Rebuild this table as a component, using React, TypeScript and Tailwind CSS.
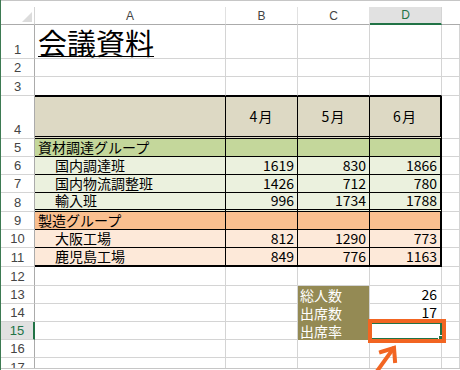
import type { ReactNode } from "react";

const FONT = "font-['Noto_Sans_CJK_JP',sans-serif]";
const HFONT = "font-['Liberation_Sans','Noto_Sans',sans-serif]";
const GRID = "border-r border-b border-r-[#d4d4d4] border-b-[#d4d4d4]";

type DataRow = { n: number; name: string; b: string; c: string; d: string; bg: string; bottom: string; h: string };

const dataRows: DataRow[] = [
  { n: 6, name: "国内調達班", b: "1619", c: "830", d: "1866", bg: "bg-[#ebf1de]", bottom: "border-b border-b-black", h: "h-[18px]" },
  { n: 7, name: "国内物流調整班", b: "1426", c: "712", d: "780", bg: "bg-[#ebf1de]", bottom: "border-b border-b-black", h: "h-[18px]" },
  { n: 8, name: "輸入班", b: "996", c: "1734", d: "1788", bg: "bg-[#ebf1de]", bottom: "border-b-[3px] border-double border-b-black", h: "h-[19px]" },
];

const osakaRows: DataRow[] = [
  { n: 10, name: "大阪工場", b: "812", c: "1290", d: "773", bg: "bg-[#fde9d9]", bottom: "border-b border-b-black", h: "h-[18px]" },
  { n: 11, name: "鹿児島工場", b: "849", c: "776", d: "1163", bg: "bg-[#fde9d9]", bottom: "border-b-2 border-b-black", h: "h-[19px]" },
];

function RowHead({ n, active = false, top = false }: { n: number; active?: boolean; top?: boolean }) {
  return (
    <div
      className={`w-[34px] shrink-0 flex justify-center border-b border-b-[#d4d4d4] text-[13px] leading-[15px] ${HFONT} ${
        top ? "items-start pt-[2px]" : "items-end pb-[1px]"
      } ${
        active
          ? "bg-[#e1e1e1] text-[#217346] border-r-2 border-r-[#217346]"
          : "bg-white text-[#444] border-r border-r-[#ababab]"
      }`}
    >
      {n}
    </div>
  );
}

function Row({ n, h, active, top, children }: { n: number; h: string; active?: boolean; top?: boolean; children?: ReactNode }) {
  return (
    <div className={`flex shrink-0 ${h}`}>
      <RowHead n={n} active={active} top={top} />
      {children}
    </div>
  );
}

function Blank() {
  return (
    <>
      <div className={`w-[191px] shrink-0 ${GRID}`} />
      <div className={`w-[72px] shrink-0 ${GRID}`} />
      <div className={`w-[72px] shrink-0 ${GRID}`} />
      <div className={`w-[72px] shrink-0 ${GRID}`} />
      <div className={`flex-1 ${GRID}`} />
    </>
  );
}

function Num({ v, bg, bottom, last = false }: { v: string; bg: string; bottom: string; last?: boolean }) {
  return (
    <div
      className={`w-[72px] shrink-0 flex items-end justify-end pr-[3px] leading-[17px] ${bg} ${bottom} ${
        last ? "border-r-2 border-r-black" : "border-r border-r-black"
      }`}
    >
      {v}
    </div>
  );
}

function TableRow({ r }: { r: DataRow }) {
  return (
    <Row n={r.n} h={r.h}>
      <div className={`w-[191px] shrink-0 flex items-end pl-[20px] leading-[17px] border-r border-r-black ${r.bg} ${r.bottom}`}>
        {r.name}
      </div>
      <Num v={r.b} bg={r.bg} bottom={r.bottom} />
      <Num v={r.c} bg={r.bg} bottom={r.bottom} />
      <Num v={r.d} bg={r.bg} bottom={r.bottom} last />
      <div className={`flex-1 ${GRID}`} />
    </Row>
  );
}

function GroupRow({ n, name, bg }: { n: number; name: string; bg: string }) {
  return (
    <Row n={n} h="h-[18px]">
      <div className={`w-[191px] shrink-0 flex items-end pl-[3px] leading-[17px] border-r border-b border-black ${bg}`}>{name}</div>
      <div className={`w-[72px] shrink-0 border-r border-b border-black ${bg}`} />
      <div className={`w-[72px] shrink-0 border-r border-b border-black ${bg}`} />
      <div className={`w-[72px] shrink-0 border-b border-b-black border-r-2 border-r-black ${bg}`} />
      <div className={`flex-1 ${GRID}`} />
    </Row>
  );
}

function SummaryRow({ n, label, value, active }: { n: number; label: string; value: string; active?: boolean }) {
  return (
    <Row n={n} h="h-[18px]" active={active}>
      <div className={`w-[191px] shrink-0 ${GRID}`} />
      <div className={`w-[72px] shrink-0 ${GRID}`} />
      <div className="w-[72px] shrink-0 flex items-end pl-[2px] leading-[17px] bg-[#948a54] text-white border-r border-r-[#d4d4d4]">
        {label}
      </div>
      <div className={`w-[72px] shrink-0 flex items-end justify-end pr-[4px] leading-[17px] ${GRID}`}>{value}</div>
      <div className={`flex-1 ${GRID}`} />
    </Row>
  );
}

export default function App() {
  return (
    <div className={`relative w-[460px] h-[370px] overflow-hidden bg-white border-l border-l-[#3d7a52] flex flex-col text-[14px] text-black ${FONT}`}>
      <div className="h-[7px] shrink-0 border-t border-t-[#c6c6c6]" />

      {/* column headers */}
      <div className={`flex h-[18px] shrink-0 text-[12px] text-[#444] ${HFONT}`}>
        <div className="w-[34px] shrink-0 flex items-end justify-end pr-[2px] pb-[2px] border-r border-b border-r-[#d4d4d4] border-b-[#ababab]">
          <svg width="10" height="10" viewBox="0 0 10 10">
            <polygon points="10,0 10,10 0,10" fill="#dcdcdc" />
          </svg>
        </div>
        <div className="w-[191px] shrink-0 flex items-center justify-center border-r border-b border-r-[#e1e1e1] border-b-[#ababab]">A</div>
        <div className="w-[72px] shrink-0 flex items-center justify-center border-r border-b border-r-[#e1e1e1] border-b-[#ababab]">B</div>
        <div className="w-[72px] shrink-0 flex items-center justify-center border-r border-b border-r-[#e1e1e1] border-b-[#ababab]">C</div>
        <div className="w-[72px] shrink-0 flex items-center justify-center bg-[#e1e1e1] text-[#217346] border-b-2 border-b-[#217346] border-r border-r-[#d4d4d4]">
          D
        </div>
        <div className="flex-1 border-b border-b-[#ababab]" />
      </div>

      <div className="flex-1 min-h-0 overflow-hidden flex flex-col">
        <Row n={1} h="h-[34px]">
          <div className={`w-[191px] shrink-0 flex items-end pl-[3px] ${GRID}`}>
            <span className="text-[29px] leading-[32px] underline decoration-1 underline-offset-[1px]">会議資料</span>
          </div>
          <div className={`w-[72px] shrink-0 ${GRID}`} />
          <div className={`w-[72px] shrink-0 ${GRID}`} />
          <div className={`w-[72px] shrink-0 ${GRID}`} />
          <div className={`flex-1 ${GRID}`} />
        </Row>
        <Row n={2} h="h-[18px]">
          <Blank />
        </Row>
        <Row n={3} h="h-[19px]">
          <div className="w-[191px] shrink-0 border-r border-b border-r-[#d4d4d4] border-b-black" />
          <div className="w-[72px] shrink-0 border-r border-b border-r-[#d4d4d4] border-b-black" />
          <div className="w-[72px] shrink-0 border-r border-b border-r-[#d4d4d4] border-b-black" />
          <div className="w-[72px] shrink-0 border-r border-b border-r-[#d4d4d4] border-b-black" />
          <div className={`flex-1 ${GRID}`} />
        </Row>

        {/* header row of the table */}
        <Row n={4} h="h-[43px]">
          <div className="w-[191px] shrink-0 bg-[#ddd9c4] border-t border-t-black border-r border-r-black border-b-[3px] border-double border-b-black" />
          {["4月", "5月", "6月"].map((m, i) => (
            <div
              key={m}
              className={`w-[72px] shrink-0 flex items-center justify-center tracking-[1px] bg-[#ddd9c4] border-t border-t-black border-b-[3px] border-double border-b-black ${
                i === 2 ? "border-r-2 border-r-black" : "border-r border-r-black"
              }`}
            >
              {m}
            </div>
          ))}
          <div className={`flex-1 ${GRID}`} />
        </Row>

        <GroupRow n={5} name="資材調達グループ" bg="bg-[#c4d79b]" />
        {dataRows.map((r) => (
          <TableRow key={r.n} r={r} />
        ))}
        <GroupRow n={9} name="製造グループ" bg="bg-[#fabf8f]" />
        {osakaRows.map((r) => (
          <TableRow key={r.n} r={r} />
        ))}

        <Row n={12} h="h-[19px]">
          <Blank />
        </Row>
        <SummaryRow n={13} label="総人数" value="26" />
        <SummaryRow n={14} label="出席数" value="17" />
        <SummaryRow n={15} label="出席率" value="" active />
        <Row n={16} h="h-[18px]">
          <Blank />
        </Row>
        <Row n={17} h="h-[18px]" top>
          <Blank />
        </Row>
      </div>
      <div className="h-[2px] shrink-0 border-t border-t-[#c6c6c6]" />

      {/* active cell D15 */}
      <div className="absolute left-[369px] top-[322px] w-[72px] h-[18px] border-2 border-[#217346]" />
      <div className="absolute left-[437px] top-[335px] w-[5px] h-[5px] bg-[#217346] border border-white" />

      {/* callout box and arrow */}
      <div className="absolute left-[367px] top-[319px] w-[78px] h-[24px] border-4 border-[#f26522]" />
      <svg className="absolute left-[360px] top-[340px]" width="50" height="32" viewBox="0 0 50 32">
        <g stroke="#f26522" strokeWidth="4" fill="none" strokeLinecap="square">
          <line x1="14" y1="34" x2="32" y2="9" />
          <polyline points="20,12 33,8 34,21" />
        </g>
      </svg>
    </div>
  );
}
